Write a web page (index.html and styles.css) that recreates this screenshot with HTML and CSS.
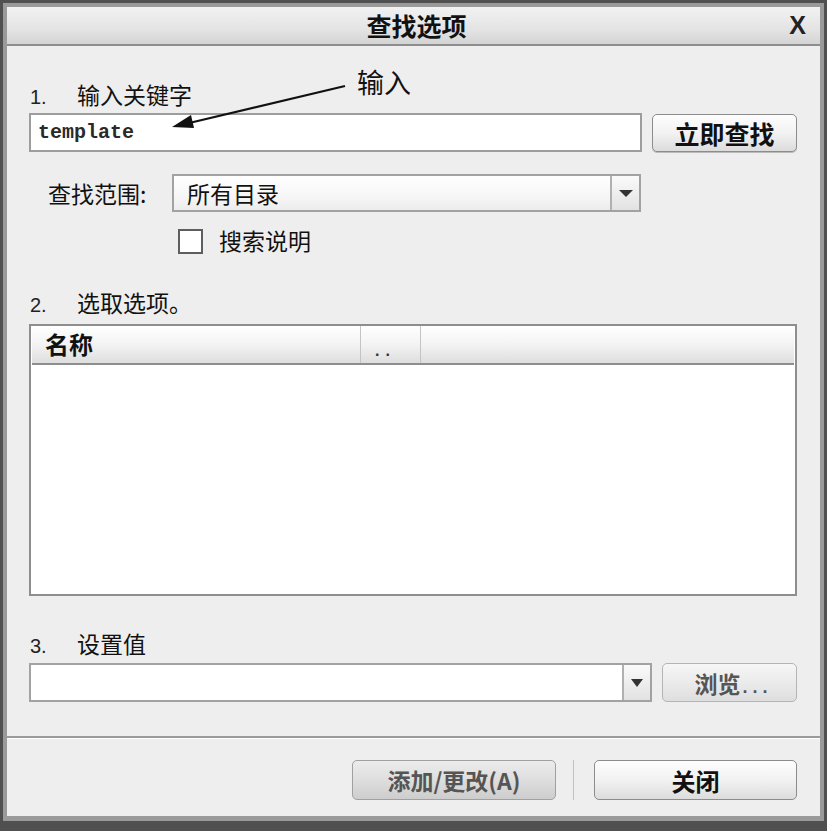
FILE: index.html
```html
<!DOCTYPE html>
<html lang="zh-CN">
<head>
<meta charset="utf-8">
<title>查找选项</title>
<link rel="stylesheet" href="styles.css">
</head>
<body>
<div class="dialog">
  <div class="titlebar">
    <span class="title">查找选项</span>
    <span class="close">X</span>
  </div>
  <div class="content">
    <div class="step"><span class="num">1.</span><span class="step-text">输入关键字</span></div>
    <div class="row-input">
      <div class="textbox mono">template</div>
      <button class="btn btn-search">立即查找</button>
    </div>
    <div class="row-range">
      <span class="range-label">查找范围:</span>
      <div class="select">
        <span class="select-text">所有目录</span>
        <span class="drop"><span class="tri"></span></span>
      </div>
    </div>
    <div class="row-check">
      <span class="checkbox"></span>
      <span class="check-label">搜索说明</span>
    </div>
    <div class="step"><span class="num">2.</span><span class="step-text">选取选项。</span></div>
    <div class="listbox">
      <div class="list-head">
        <div class="col col-name">名称</div>
        <div class="col col-dots">..</div>
        <div class="col col-rest"></div>
      </div>
    </div>
    <div class="step step3"><span class="num">3.</span><span class="step-text">设置值</span></div>
    <div class="row-combo">
      <div class="combo">
        <span class="combo-field"></span>
        <span class="drop drop-small"><span class="tri tri-small"></span></span>
      </div>
      <button class="btn btn-browse">浏览<span class="dots">...</span></button>
    </div>
  </div>
  <div class="footer">
    <button class="btn btn-add">添加/更改(A)</button>
    <span class="vsep"></span>
    <button class="btn btn-close">关闭</button>
  </div>
  <div class="annot">输入</div>
  <svg class="arrow" width="200" height="60" viewBox="0 0 200 60">
    <line x1="180" y1="6" x2="20" y2="44" stroke="#111" stroke-width="2.2"/>
    <polygon points="7,47 26,35 29,48" fill="#111"/>
  </svg>
</div>
</body>
</html>
```

FILE: styles.css
```css
* { box-sizing: border-box; }
html, body { margin: 0; padding: 0; }
body {
  background: #505050;
  padding: 3px 3px 10px 3px;
  width: 827px;
  height: 831px;
  font-family: "Noto Sans CJK SC", "Noto Sans", sans-serif;
  color: #111;
}
.dialog {
  position: relative;
  height: 818px;
  border-style: solid;
  border-color: #9a9a9a;
  border-width: 4px 4px 5px 4px;
  background: #eeeeee;
  display: flex;
  flex-direction: column;
}
.titlebar {
  position: relative;
  height: 39px;
  background: linear-gradient(#f2f2f2, #e4e4e4 60%, #d4d4d4);
  border-bottom: 2px solid #8e8e8e;
  display: flex;
  align-items: center;
  justify-content: center;
}
.title {
  font-size: 25px;
  font-weight: 700;
  margin-left: 6px;
  line-height: 37px;
}
.close {
  position: absolute;
  right: 14px;
  top: 4px;
  font-family: "Liberation Sans", sans-serif;
  font-weight: 700;
  font-size: 25px;
  color: #222;
}
.content {
  padding: 0 23px 0 22px;
  flex: 1;
  border-bottom: 2px solid #9a9a9a;
  box-shadow: 0 1px 0 #ffffff;
}
.step {
  margin-top: 33px;
  height: 30px;
  display: flex;
  align-items: baseline;
  line-height: 30px;
}
.step3 { margin-top: 32px; }
.num {
  width: 48px;
  padding-left: 1px;
  font-family: "Liberation Sans", sans-serif;
  font-size: 20px;
  color: #222;
}
.step-text { font-size: 23px; }
.row-input {
  margin-top: 4px;
  display: flex;
  gap: 10px;
  align-items: flex-start;
}
.textbox {
  flex: 1;
  height: 39px;
  background: #fff;
  border: 2px solid #9d9d9d;
  display: flex;
  align-items: center;
  padding-left: 7px;
}
.mono {
  font-family: "Liberation Mono", monospace;
  font-size: 20px;
  font-weight: 700;
  color: #2a2a2a;
}
.btn {
  font-family: "Noto Sans CJK SC", sans-serif;
  font-weight: 700;
  border: 1px solid #8c8c8c;
  border-radius: 5px;
  background: linear-gradient(#fdfdfd, #f2f2f2 50%, #dcdcdc);
  color: #111;
  padding: 0;
  margin: 0;
}
.btn-search {
  width: 145px;
  height: 38px;
  margin-top: 1px;
  font-size: 25px;
  box-shadow: 0 1px 0 #bbb;
}
.row-range {
  margin-top: 22px;
  display: flex;
  align-items: center;
  padding-left: 19px;
}
.range-label {
  width: 124px;
  font-size: 23px;
}
.select {
  width: 469px;
  height: 38px;
  border: 2px solid #a2a2a2;
  background: linear-gradient(#ffffff, #f6f6f6 60%, #ececec);
  display: flex;
  align-items: center;
}
.select-text {
  flex: 1;
  padding-left: 13px;
  font-size: 23px;
}
.drop {
  width: 29px;
  height: 100%;
  border-left: 2px solid #b0b0b0;
  background: linear-gradient(#fafafa, #e2e2e2);
  display: flex;
  align-items: center;
  justify-content: center;
}
.tri {
  width: 0;
  height: 0;
  border-left: 7px solid transparent;
  border-right: 7px solid transparent;
  border-top: 7px solid #333;
}
.row-check {
  margin-top: 17px;
  display: flex;
  align-items: center;
  padding-left: 149px;
  height: 25px;
}
.checkbox {
  width: 25px;
  height: 25px;
  background: #fff;
  border: 2px solid #5e5e5e;
}
.check-label {
  margin-left: 16px;
  font-size: 23px;
  margin-top: -3px;
}
.listbox {
  margin-top: 7px;
  height: 272px;
  border: 2px solid #8e8e8e;
  background: #fff;
}
.list-head {
  height: 39px;
  display: flex;
  border-bottom: 2px solid #8e8e8e;
  background: linear-gradient(#ffffff, #f3f3f3 50%, #dedede);
  margin: 0 1px;
}
.col { height: 100%; }
.col-name {
  width: 329px;
  border-right: 1px solid #c4c4c4;
  font-weight: 700;
  font-size: 24px;
  padding-left: 13px;
  line-height: 36px;
}
.col-dots {
  width: 60px;
  border-right: 1px solid #c4c4c4;
  font-family: "Liberation Sans", sans-serif;
  font-weight: 700;
  font-size: 16px;
  padding-left: 14px;
  padding-top: 16px;
  letter-spacing: 6px;
  color: #333;
}
.col-rest { flex: 1; }
.row-combo {
  margin-top: 5px;
  display: flex;
  gap: 10px;
}
.combo {
  width: 623px;
  height: 39px;
  border: 2px solid #a2a2a2;
  background: #fff;
  display: flex;
}
.combo-field { flex: 1; }
.drop-small { width: 28px; }
.tri-small {
  border-left-width: 6px;
  border-right-width: 6px;
  border-top-width: 8px;
}
.btn-browse {
  width: 135px;
  height: 39px;
  font-size: 23px;
  color: #555;
  border-color: #b4b4b4;
  background: linear-gradient(#f6f6f6, #ebebeb 50%, #dedede);
  padding-left: 8px;
}
.dots {
  font-family: "Liberation Sans", sans-serif;
  font-size: 18px;
  letter-spacing: 5px;
  margin-left: 2px;
}
.footer {
  height: 78px;
  display: flex;
  align-items: flex-start;
  justify-content: flex-end;
  padding: 22px 23px 0 0;
}
.btn-add {
  width: 204px;
  height: 40px;
  font-size: 23px;
  color: #555;
  background: linear-gradient(#ececec, #dedede 50%, #cdcdcd);
  border-color: #a0a0a0;
}
.vsep {
  width: 1px;
  height: 40px;
  background: #c2c2c2;
  margin: 0 20px 0 17px;
}
.btn-close {
  width: 203px;
  height: 40px;
  font-size: 24px;
}
.annot {
  position: absolute;
  left: 350px;
  top: 57px;
  font-size: 27px;
  line-height: 36px;
}
.arrow {
  position: absolute;
  left: 158px;
  top: 73px;
}
```
